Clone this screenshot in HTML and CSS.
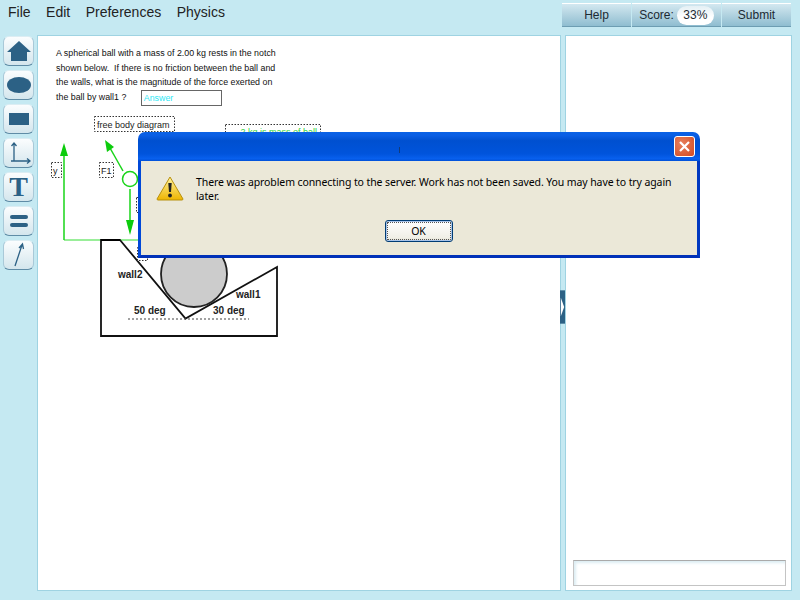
FILE: index.html
```html
<!DOCTYPE html>
<html lang="en">
<head>
  <meta charset="UTF-8">
  <title>Physics</title>
  <link rel="stylesheet" href="styles.css">
</head>
<body>
  <div class="app">
    <header class="topbar">
      <nav class="menu">
        <span>File</span>
        <span>Edit</span>
        <span>Preferences</span>
        <span>Physics</span>
      </nav>
      <div class="actions">
        <div class="action action-help">Help</div>
        <div class="action action-score">Score: <span class="pill">33%</span></div>
        <div class="action action-submit">Submit</div>
      </div>
    </header>

    <main class="workspace">
      <div class="toolbar">
        <button class="tool"><svg width="26" height="24" viewBox="0 0 26 24"><path class="fill" d="M13 2 L25 13 L21 13 L21 22 L5 22 L5 13 L1 13 Z"/></svg></button>
        <button class="tool"><svg width="26" height="20" viewBox="0 0 26 20"><ellipse class="fill" cx="13" cy="10" rx="12" ry="8"/></svg></button>
        <button class="tool"><svg width="22" height="14" viewBox="0 0 22 14"><rect class="fill" x="1" y="1" width="20" height="12"/></svg></button>
        <button class="tool"><svg width="26" height="24" viewBox="0 0 26 24"><path class="line" d="M8 2 V20 H24 M5.500 5 L8 2 L10.500 5 M21 17.500 L24 20 L21 22.500 M5 20 H8"/></svg></button>
        <button class="tool tool-text">T</button>
        <button class="tool"><svg width="20" height="14" viewBox="0 0 20 14"><rect class="fill" x="1" y="1" width="18" height="4" rx="2"/><rect class="fill" x="1" y="9" width="18" height="4" rx="2"/></svg></button>
        <button class="tool"><svg width="16" height="26" viewBox="0 0 16 26"><path class="line" d="M4 24 L11 3 M8 6 L11.500 2 L12.500 7"/></svg></button>
      </div>

      <section class="canvas">
        <p class="problem">A spherical ball with a mass of 2.00 kg rests in the notch<br>shown below.&nbsp; If there is no friction between the ball and<br>the walls, what is the magnitude of the force exerted on<br>the ball by wall1 ? <span class="answer">Answer</span></p>

        <svg class="drawing" width="522" height="555" viewBox="38 36 522 555">
          <!-- green construction -->
          <path class="axis-light" d="M64 240 H142"/>
          <path class="green" d="M64 154 V240"/>
          <path class="green-fill" d="M64 143 L68 156 L60 156 Z"/>
          <path class="green" d="M123 171 L110 148"/>
          <path class="green-fill" d="M105 140 L114 147 L107 152 Z"/>
          <circle class="green" cx="130" cy="179" r="7.500"/>
          <path class="green" d="M130 189 V222"/>
          <path class="green-fill" d="M126 220 H134 L130 235 Z"/>

          <!-- notch and ball -->
          <circle class="ball" cx="194" cy="274" r="33"/>
          <path class="wall" d="M120 240 L185.500 318.500 L277 267 V336 H101 V240 Z"/>
          <path class="wall-top" d="M101 240 H120"/>
          <path class="ground" d="M128 319 H249"/>
          <text class="lbl-bold" x="118" y="278">wall2</text>
          <text class="lbl-bold" x="236" y="298">wall1</text>
          <text class="lbl-bold" x="134" y="314">50 deg</text>
          <text class="lbl-bold" x="213" y="314">30 deg</text>

          <!-- text boxes -->
          <rect class="dash" x="94.500" y="116.500" width="80" height="15"/>
          <text class="lbl" x="97" y="128">free body diagram</text>
          <rect class="dash" x="51.500" y="162.500" width="10" height="15"/>
          <text class="lbl" x="53" y="174">y</text>
          <rect class="dash" x="99.500" y="162.500" width="14" height="15"/>
          <text class="lbl" x="101" y="174">F1</text>
          <rect class="dash" x="225.500" y="124.500" width="95" height="20"/>
          <text class="lbl-green" x="229" y="135">▬ 2 kg is mass of ball</text>
          <rect class="dash" x="136.500" y="197.500" width="10" height="15"/>
          <rect class="dash" x="137.500" y="247.500" width="10" height="13"/>
        </svg>
      </section>

      <div class="divider"><svg width="6" height="40" viewBox="0 0 6 40"><rect class="handle" width="6" height="40"/><path class="chevron" d="M1 9 L5 20 L1 31 Z"/></svg></div>

      <aside class="side">
        <div class="side-input"></div>
      </aside>
    </main>
  </div>

  <div class="dialog">
    <div class="dialog-title">
      <span class="title-mark"></span>
      <span class="dialog-close"><svg width="13" height="13" viewBox="0 0 13 13"><path class="close-x" d="M2 2 L11 11 M11 2 L2 11"/></svg></span>
    </div>
    <div class="dialog-body">
      <div class="dialog-row">
        <svg class="warn" width="28" height="25" viewBox="0 0 28 25">
          <defs>
            <linearGradient id="warnfill" x1="0" y1="0" x2="0" y2="1">
              <stop offset="0" stop-color="#fff3a0"/>
              <stop offset="1" stop-color="#eeb400"/>
            </linearGradient>
          </defs>
          <path d="M14 1 L27 23 Q27 24 26 24 H2 Q1 24 1 23 Z" fill="url(#warnfill)" stroke="#b8900c"/>
          <path class="warn-mark" d="M12.300 7 H15.700 L15 16 H13 Z"/>
          <circle class="warn-mark" cx="14" cy="19.500" r="1.900"/>
        </svg>
        <p class="dialog-text">There was aproblem connecting to the server. Work has not been saved. You may have to try again later.</p>
      </div>
      <div class="dialog-buttons">
        <button class="ok"><span class="ok-inner">OK</span></button>
      </div>
    </div>
  </div>
</body>
</html>
```

FILE: styles.css
```css
* { box-sizing: border-box; }
html, body {
  margin: 0;
  height: 100%;
  overflow: hidden;
}
body {
  position: relative;
  background: #c5e9f2;
  font-family: 'Liberation Sans', Arial, sans-serif;
  color: #222;
}
.app {
  display: flex;
  flex-direction: column;
  height: 600px;
}

/* top bar */
.topbar {
  display: flex;
  justify-content: space-between;
  height: 35px;
  padding: 3px 9px 0 8px;
}
.menu {
  display: flex;
  gap: 15.500px;
  font-size: 14px;
  line-height: 18px;
}
.actions {
  display: flex;
  gap: 1px;
  height: 24px;
}
.action {
  display: flex;
  align-items: center;
  justify-content: center;
  gap: 3px;
  font-size: 12px;
  background: linear-gradient(#d3e8f0, #8fbdd0);
  border-top: 1px solid #fff;
  border-bottom: 1px solid #6d9db2;
  color: #1c2a33;
}
.action-help { width: 69px; }
.action-score { width: 89px; }
.action-submit { width: 69px; }
.pill {
  display: block;
  width: 37px;
  height: 19px;
  line-height: 19px;
  text-align: center;
  border-radius: 10px;
  background: linear-gradient(#e4f0f5, #fff 60%);
}

/* main area */
.workspace {
  display: flex;
  height: 556px;
}
.toolbar {
  display: flex;
  flex-direction: column;
  gap: 4px;
  width: 37px;
  padding: 1px 0 0 3px;
}
.tool {
  display: flex;
  align-items: center;
  justify-content: center;
  width: 31px;
  height: 30px;
  padding: 0;
  border: 1px solid #dcedf3;
  border-bottom: 1px solid #5f8ca6;
  border-left-color: #a9c9d8;
  border-right-color: #a9c9d8;
  border-radius: 6px;
  background: linear-gradient(#fbfdfe, #d4e6ed);
}
.tool-text {
  font-family: 'Liberation Serif', 'Times New Roman', serif;
  font-weight: bold;
  font-size: 28px;
  line-height: 1;
  color: #2c6185;
}
.fill { fill: #2c6185; }
.line {
  fill: none;
  stroke: #2c6185;
  stroke-width: 1.300;
}

.canvas {
  position: relative;
  width: 524px;
  background: #fff;
  border: 1px solid #9fd3e2;
}
.problem {
  margin: 0;
  padding: 10px 0 0 18px;
  font-size: 8.850px;
  line-height: 14.700px;
  white-space: nowrap;
  color: #111;
}
.answer {
  display: inline-block;
  width: 81px;
  height: 16px;
  margin-left: 12px;
  padding-left: 2px;
  line-height: 15px;
  vertical-align: middle;
  border: 1px solid #666;
  color: #2fe8f5;
}
.drawing {
  position: absolute;
  left: 0;
  top: 0;
}
.green {
  fill: none;
  stroke: #19d419;
  stroke-width: 1.500;
}
.green-fill { fill: #0ccc0c; }
.axis-light {
  fill: none;
  stroke: #77e877;
  stroke-width: 1.500;
}
.ball {
  fill: #cccccc;
  stroke: #222;
  stroke-width: 1.800;
}
.wall {
  fill: none;
  stroke: #111;
  stroke-width: 1.800;
}
.wall-top {
  fill: none;
  stroke: #000;
  stroke-width: 2;
}
.ground {
  fill: none;
  stroke: #444;
  stroke-dasharray: 2 2;
}
.dash {
  fill: #fff;
  stroke: #333;
  stroke-dasharray: 1.500 1.500;
}
.lbl, .lbl-green, .lbl-bold {
  font-family: 'Liberation Sans', Arial, sans-serif;
  font-size: 9px;
  fill: #222;
}
.lbl-green { fill: #2fd43a; }
.lbl-bold {
  font-size: 10px;
  font-weight: bold;
}

.divider {
  display: flex;
  align-items: flex-start;
  width: 5px;
  margin-left: -1px;
  padding-top: 252px;
  position: relative;
  z-index: 1;
}
.handle { fill: #2c6185; }
.chevron { fill: #fff; }

.side {
  position: relative;
  display: flex;
  align-items: flex-end;
  width: 227px;
  padding: 0 5px 4px 7px;
  background: #fff;
  border: 1px solid #9fd3e2;
}
.side-input {
  width: 100%;
  height: 26px;
  background: #fff;
  border: 1px solid #c4c4c4;
  border-top-color: #aaa;
  box-shadow: inset 2px 2px 3px #dcedf3;
}

/* error dialog */
.dialog {
  position: absolute;
  left: 138px;
  top: 132px;
  width: 562px;
  height: 126px;
  display: flex;
  flex-direction: column;
  font-family: 'Noto Sans', 'DejaVu Sans', sans-serif;
  color: #000;
}
.dialog-title {
  position: relative;
  display: flex;
  justify-content: flex-end;
  align-items: center;
  height: 29px;
  padding-right: 5px;
  border-radius: 7px 7px 0 0;
  background: linear-gradient(#0a62e6 0, #0a5ee4 12%, #0050d0 30%, #0054dc 75%, #0860ee 92%, #0050d8 100%);
}
.title-mark {
  position: absolute;
  left: 261px;
  top: 15px;
  width: 1px;
  height: 6px;
  background: #123a78;
}
.dialog-close {
  display: flex;
  align-items: center;
  justify-content: center;
  width: 21px;
  height: 21px;
  border: 1px solid #fff;
  border-radius: 3px;
  background: radial-gradient(circle at 35% 35%, #e8805c, #d24a22);
}
.close-x {
  fill: none;
  stroke: #fff;
  stroke-width: 2.200;
}
.dialog-body {
  flex: 1;
  padding: 8px 16px 0 15px;
  background: #ebe8d8;
  border: 3px solid #0048d8;
  border-top: none;
  border-right-color: #0038c0;
  border-bottom-color: #0031b8;
}
.dialog-row {
  display: flex;
  gap: 12px;
}
.warn {
  flex: none;
  margin-top: 7px;
}
.warn-mark { fill: #222; }
.dialog-text {
  margin: 6px 0 0 0;
  font-size: 10.500px;
  letter-spacing: -0.100px;
  line-height: 14px;
}
.dialog-buttons {
  display: flex;
  justify-content: center;
  margin-top: 17px;
}
.ok {
  width: 68px;
  height: 22px;
  padding: 1px;
  border: 1px solid #003c74;
  border-radius: 3px;
  background: linear-gradient(#fff, #f0efe6 85%, #dcd8c8);
  box-shadow: inset 0 0 0 1px #a8c4ea;
  font-family: inherit;
  font-size: 10.500px;
  color: #000;
}
.ok-inner {
  display: block;
  height: 100%;
  line-height: 16px;
  border: 1px dotted #555;
}
```
